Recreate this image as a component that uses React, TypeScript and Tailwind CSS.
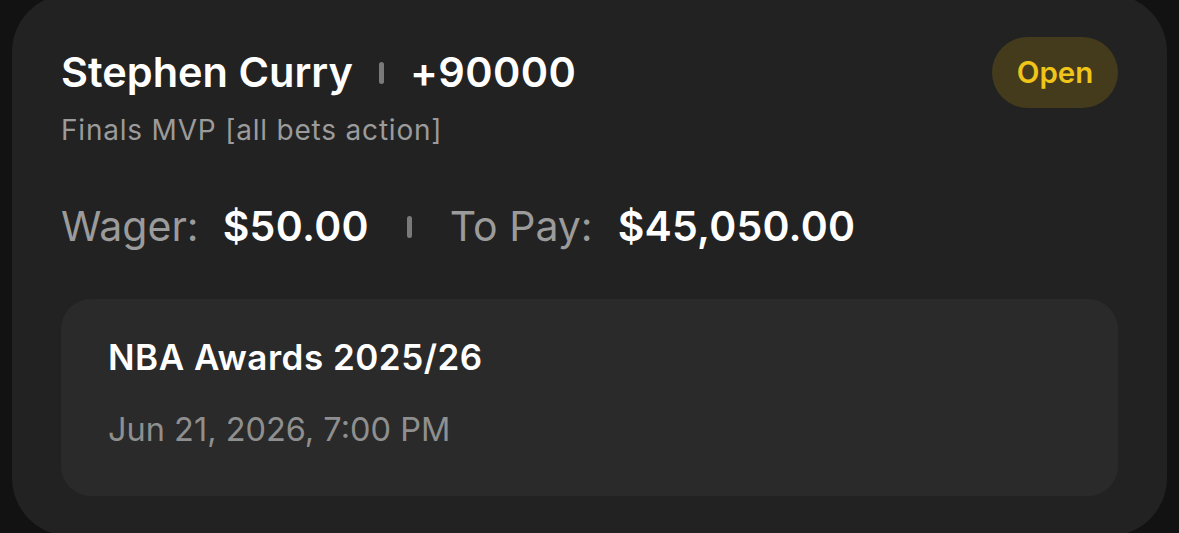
import React from "react";

export default function App() {
  return (
    <div className="w-[1179px] h-[533px] bg-[#121212] overflow-hidden px-[12px]" style={{ fontFamily: "Inter, 'Noto Sans', sans-serif" }}>
      <div className="mt-[-6px] h-[542px] bg-[#222222] rounded-[58px] pl-[49px] pr-[49px] pt-[43px] flex flex-col">
        <div className="flex items-start justify-between h-[72px]">
          <div className="flex items-center h-[72px]">
            <span className="text-[41.5px] font-semibold text-white leading-none">Stephen Curry</span>
            <span className="mx-[26px] w-[5px] h-[22px] rounded-full bg-[#7a7a7a]"></span>
            <span className="text-[41.5px] tracking-[0.4px] font-semibold text-white leading-none">+90000</span>
          </div>
          <div className="h-[71px] w-[126px] rounded-full bg-[#433b1c] flex items-center justify-center">
            <span className="text-[29.5px] font-semibold text-[#f0c51a] leading-none">Open</span>
          </div>
        </div>
        <div className="mt-[7px] text-[28px] tracking-[0.8px] text-[#9b9b9b] leading-none">Finals MVP [all bets action]</div>
        <div className="flex items-center mt-[62px] h-[41px]">
          <span className="text-[41px] text-[#9b9b9b] leading-none">Wager:</span>
          <span className="ml-[24px] text-[41px] tracking-[0.3px] font-semibold text-white leading-none">$50.00</span>
          <span className="ml-[38px] mr-[38px] w-[5px] h-[22px] rounded-full bg-[#7a7a7a]"></span>
          <span className="text-[41px] text-[#9b9b9b] leading-none">To Pay:</span>
          <span className="ml-[25px] text-[41px] tracking-[0.2px] font-semibold text-white leading-none">$45,050.00</span>
        </div>
        <div className="mt-[52px] h-[197px] rounded-[30px] bg-[#2a2a2a] pl-[47px] pt-[41px] flex flex-col">
          <span className="text-[35px] tracking-[0.5px] font-semibold text-white leading-none">NBA Awards 2025/26</span>
          <span className="mt-[39px] text-[32.5px] text-[#8f8f8f] leading-none">Jun 21, 2026, 7:00 PM</span>
        </div>
      </div>
    </div>
  );
}
